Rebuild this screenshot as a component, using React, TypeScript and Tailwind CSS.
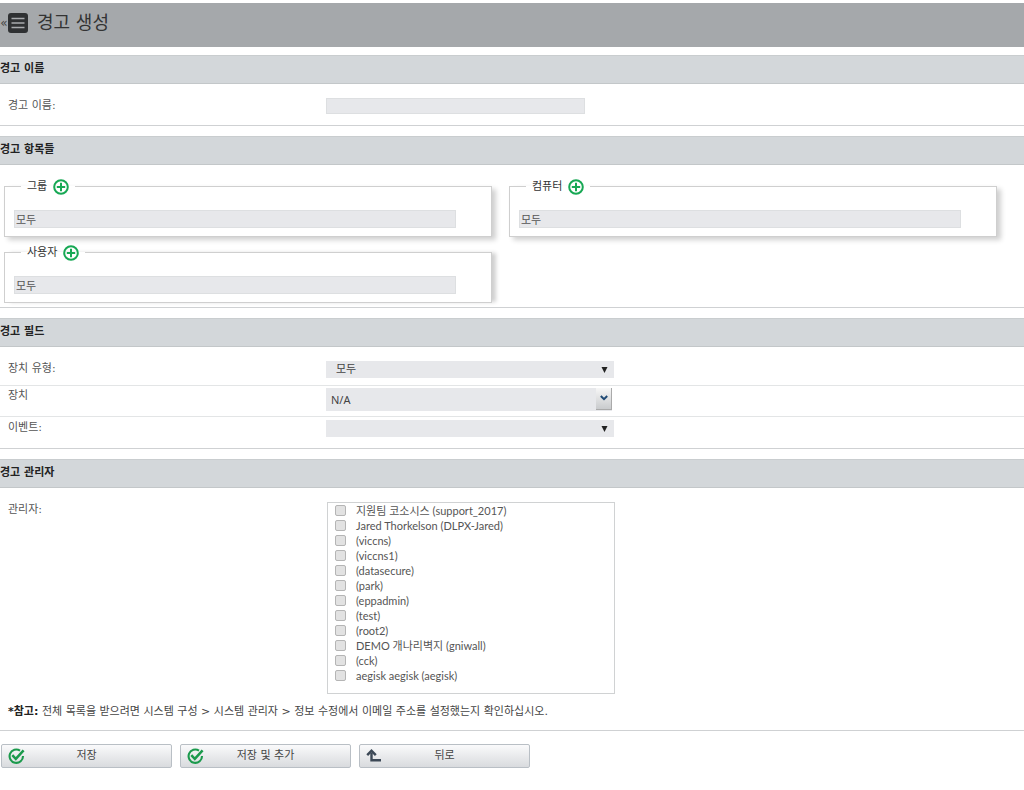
import { useState } from "react"
import type { ReactNode } from "react"

const managers = [
  "지원팀 코소시스 (support_2017)",
  "Jared Thorkelson (DLPX-Jared)",
  "(viccns)",
  "(viccns1)",
  "(datasecure)",
  "(park)",
  "(eppadmin)",
  "(test)",
  "(root2)",
  "DEMO 개나리벽지 (gniwall)",
  "(cck)",
  "aegisk aegisk (aegisk)",
]

function MenuIcon() {
  return (
    <svg width="20" height="20" viewBox="0 0 20 20" aria-hidden="true">
      <rect width="20" height="20" rx="3" fill="#2f3133" />
      <path d="M3.5 5.5h13M3.5 10h13M3.5 14.5h13" stroke="#a9abae" strokeWidth="1.6" />
    </svg>
  )
}

function PlusIcon() {
  return (
    <svg width="16" height="16" viewBox="0 0 16 16" fill="none" stroke="#17a854" strokeWidth="2" aria-hidden="true">
      <circle cx="8" cy="8" r="6.8" />
      <path d="M8 3.8v8.4M3.8 8h8.4" />
    </svg>
  )
}

function CheckIcon() {
  return (
    <svg width="17" height="17" viewBox="0 0 17 17" fill="none" stroke="#1b9a4c" aria-hidden="true">
      <path d="M12 2.6A6.7 6.7 0 1 0 15 8" strokeWidth="2.1" />
      <path d="M4.3 7.2l3.5 3.7L15.6 2.4" strokeWidth="2.5" />
    </svg>
  )
}

function BackIcon() {
  return (
    <svg width="16" height="14" viewBox="0 0 16 14" fill="none" aria-hidden="true">
      <path d="M5.5 4v7.2h9.5" stroke="#3c4856" strokeWidth="2.4" />
      <path d="M1.2 6.2L5.5 1.8l4.3 4.4" stroke="#3c4856" strokeWidth="2.4" />
    </svg>
  )
}

function Section({ title, children }: { title: string; children: ReactNode }) {
  return (
    <section className="mb-2.5 border-b border-[#cfd1d3]">
      <h2 className="h-[29px] border-y border-t-[#c9cdcf] border-b-[#c3c7c9] bg-[#d3d7da] text-[11px] leading-[26px] font-bold text-[#222]">
        {title}
      </h2>
      {children}
    </section>
  )
}

function Entity({ label, className }: { label: string; className: string }) {
  return (
    <fieldset className={`min-w-0 border border-[#cfcfcf] pt-[15px] pr-[35px] pb-2 pl-[9px] ${className}`}>
      <legend className="ml-[7px] flex h-[18px] items-center gap-1.5 px-1.5 pt-0.5 text-[#333]">
        {label}
        <button type="button" aria-label={`${label} 추가`}>
          <PlusIcon />
        </button>
      </legend>
      <input
        aria-label={label}
        defaultValue="모두"
        className="block h-[18px] w-full border border-[#dddfe1] bg-[#e7e8eb] px-px text-[#555]"
      />
    </fieldset>
  )
}

function Select({ id, options }: { id: string; options: string[] }) {
  return (
    <div className="relative w-72">
      <select id={id} className="block h-[17px] w-full appearance-none bg-[#e7e8eb] px-2.5 leading-[17px] text-[#444]">
        {options.map((option) => (
          <option key={option}>{option}</option>
        ))}
      </select>
      <svg className="pointer-events-none absolute top-1.5 right-1.5" width="7" height="6" viewBox="0 0 7 6" aria-hidden="true">
        <path d="M0.5 0h6L3.5 6z" fill="#222" />
      </svg>
    </div>
  )
}

function ActionButton({ icon, children }: { icon: ReactNode; children: ReactNode }) {
  return (
    <button
      type="button"
      className="flex h-6 w-[171px] items-center rounded-xs border border-[#b9bfc5] bg-linear-to-b from-[#fafafb] to-[#d9dbde] pr-[26px] pl-1.5 text-[#444]"
    >
      <span className="w-5">{icon}</span>
      <span className="flex-1 text-center">{children}</span>
    </button>
  )
}

const row = "grid grid-cols-[318px_1fr] pl-2"

export default function App() {
  const [device, setDevice] = useState("N/A")

  return (
    <main className="bg-white pt-[3px] font-['DejaVu_Sans','Noto_Sans_CJK_KR',sans-serif] text-[11px] leading-4 text-[#555]">
      <header className="mb-2 flex h-11 items-center bg-[#a5a8ab] pb-1">
        <button type="button" aria-label="메뉴" className="flex items-center text-[#444]">
          <span className="w-2 text-xs">«</span>
          <MenuIcon />
        </button>
        <h1 className="ml-[9px] text-lg leading-6 text-[#333]">경고 생성</h1>
      </header>

      <form>
        <Section title="경고 이름">
          <div className={`${row} pt-3.5 pb-[11px]`}>
            <label htmlFor="name">경고 이름:</label>
            <input id="name" className="h-4 w-[259px] border border-[#dddfe1] bg-[#e7e8eb] px-1" />
          </div>
        </Section>

        <Section title="경고 항목들">
          <div className="grid grid-cols-2 gap-x-[17px] gap-y-1.5 pt-3 pr-[27px] pb-1 pl-1">
            <Entity label="그룹" className="shadow-[4px_3px_5px_#d0d0d0]" />
            <Entity label="컴퓨터" className="shadow-[4px_3px_5px_#d0d0d0]" />
            <Entity label="사용자" className="shadow-[5px_0_4px_-1px_#d0d0d0]" />
          </div>
        </Section>

        <Section title="경고 필드">
          <div className={`${row} border-b border-[#e3e5e6] pt-3.5 pb-[7px]`}>
            <label htmlFor="type">장치 유형:</label>
            <Select id="type" options={["모두"]} />
          </div>
          <div className={`${row} border-b border-[#e3e5e6] pt-0.5 pb-[5px]`}>
            <label htmlFor="device">장치</label>
            <div className="flex h-[23px] w-[286px] bg-[#e7e8eb]">
              <input
                id="device"
                value={device}
                onChange={(e) => setDevice(e.target.value)}
                className="min-w-0 flex-1 px-[5px] font-['Noto_Sans','Noto_Sans_CJK_KR',sans-serif] text-[#444]"
              />
              <button
                type="button"
                aria-label="장치 목록"
                className="flex h-[22px] w-4 justify-center border-r border-b border-[#aaa] bg-linear-to-b from-[#f7f7f7] to-[#c9cbcd] pt-[7px]"
              >
                <svg width="8" height="6" viewBox="0 0 8 6" fill="none" aria-hidden="true">
                  <path d="M0.8 1L4 4.2L7.2 1" stroke="#1f4a75" strokeWidth="2" />
                </svg>
              </button>
            </div>
          </div>
          <div className={`${row} pt-[3px] pb-[11px]`}>
            <label htmlFor="event">이벤트:</label>
            <Select id="event" options={[""]} />
          </div>
        </Section>

        <Section title="경고 관리자">
          <div className={`${row} pt-3.5`}>
            <span id="managers">관리자:</span>
            <ul
              aria-labelledby="managers"
              className="ml-px h-48 w-72 overflow-auto border border-[#d0d2d3] pl-[7px] font-['Lato','Noto_Sans_CJK_KR',sans-serif]"
            >
              {managers.map((manager) => (
                <li key={manager}>
                  <label className="flex h-[15px] items-center gap-2.5">
                    <input
                      type="checkbox"
                      className="size-[11px] appearance-none rounded-xs border border-[#b5b5b5] bg-[#e2e2e2] checked:bg-[#1b9a4c]"
                    />
                    {manager}
                  </label>
                </li>
              ))}
            </ul>
          </div>
          <p className="px-2 py-2.5 text-[#444]">
            <strong className="text-[#222]">*참고:</strong> 전체 목록을 받으려면 시스템 구성 &gt; 시스템 관리자 &gt; 정보 수정에서 이메일 주소를 설정했는지 확인하십시오.
          </p>
        </Section>

        <div className="flex gap-2 pt-[3px] pl-px">
          <ActionButton icon={<CheckIcon />}>저장</ActionButton>
          <ActionButton icon={<CheckIcon />}>저장 및 추가</ActionButton>
          <ActionButton icon={<BackIcon />}>뒤로</ActionButton>
        </div>
      </form>
    </main>
  )
}
